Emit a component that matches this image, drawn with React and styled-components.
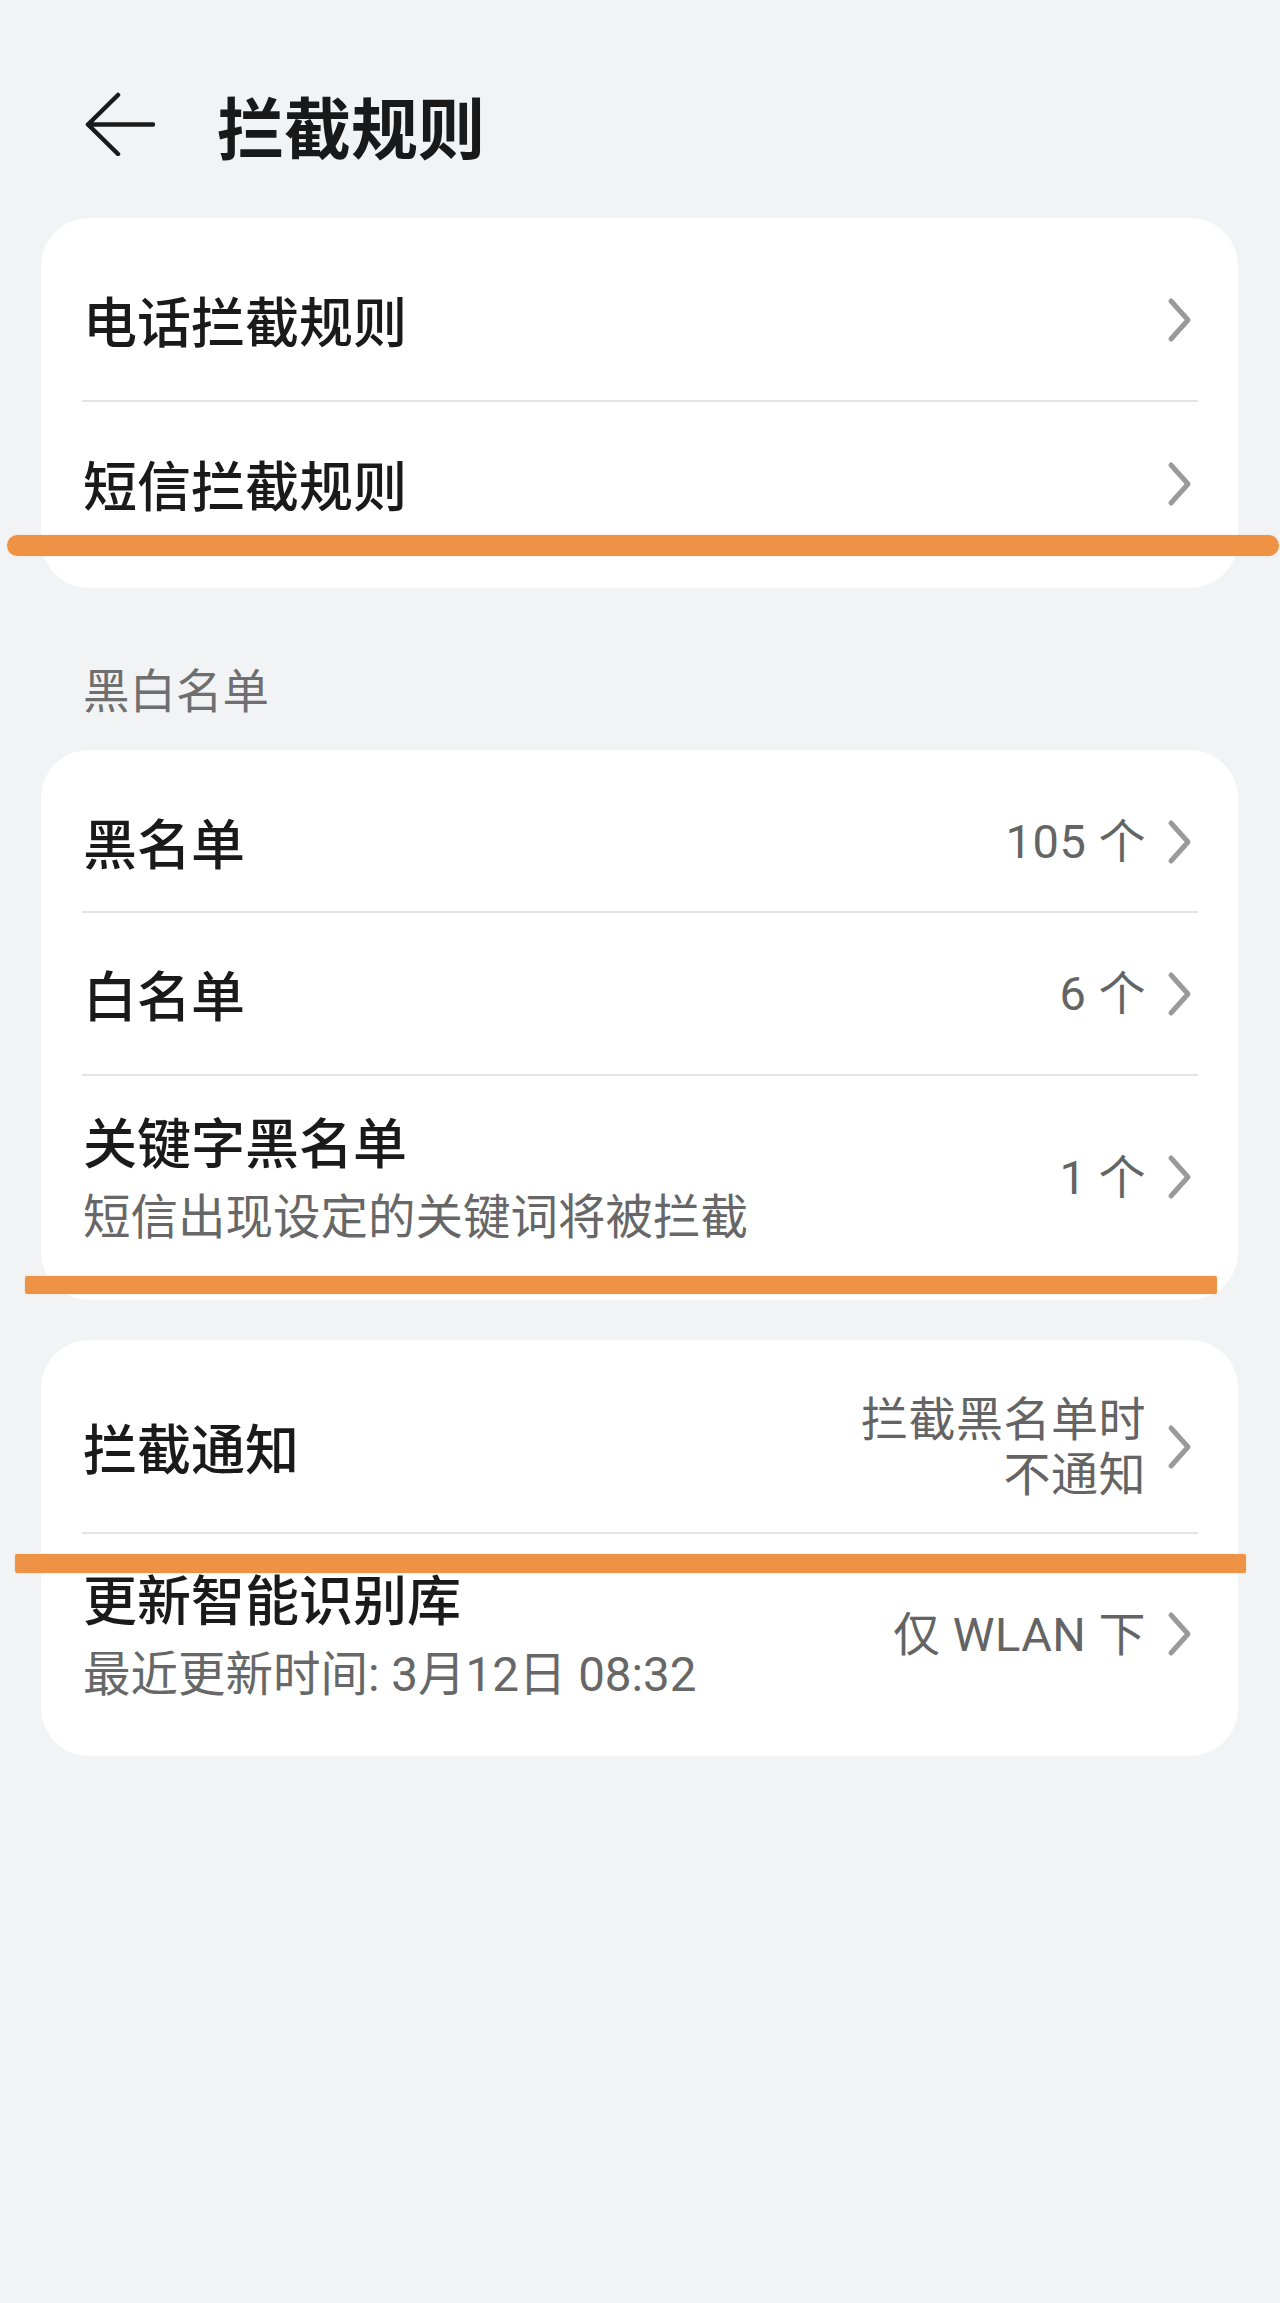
import React from "react";
import styled, { createGlobalStyle } from "styled-components";

const GlobalStyle = createGlobalStyle`
  html, body {
    margin: 0;
    padding: 0;
    background: #f1f3f5;
  }
  body {
    font-family: Roboto, "Noto Sans CJK SC", "Noto Sans", sans-serif;
    -webkit-font-smoothing: antialiased;
  }
`;

const Page = styled.div`
  position: relative;
  min-height: 2303px;
  box-sizing: border-box;
  padding: 60px 42px 0 41px;
  background: #f1f3f5;
`;

const Header = styled.header`
  display: flex;
  align-items: center;
  height: 128px;
  padding-left: 44px;
`;

const BackButton = styled.button`
  display: flex;
  padding: 0;
  border: 0;
  background: none;
  cursor: pointer;
`;

const Title = styled.h1`
  margin: 0 0 0 62px;
  font-family: "Noto Sans CJK SC", sans-serif;
  font-size: 67px;
  font-weight: 700;
  line-height: 1;
  color: #191919;
`;

const Card = styled.section`
  background: #ffffff;
  border-radius: 48px;
  padding: 22px 0;
  margin-top: ${(p) => p.$gap}px;
`;

const SectionLabel = styled.div`
  margin: 70px 0 32px;
  padding-left: 42px;
  font-family: "Noto Sans CJK SC", sans-serif;
  font-size: 46.5px;
  line-height: 60px;
  color: #6f6f6f;
`;

const Row = styled.div`
  display: flex;
  align-items: center;
  justify-content: space-between;
  height: ${(p) => p.$h}px;
  padding: 0 44px 0 42px;
`;

const TextBlock = styled.div`
  display: flex;
  flex-direction: column;
  gap: 11px;
`;

const RowTitle = styled.div`
  font-family: "Noto Sans CJK SC", sans-serif;
  font-size: 54px;
  font-weight: 500;
  line-height: 70px;
  color: #1a1a1a;
`;

const RowSub = styled.div`
  font-size: 47.5px;
  line-height: 62px;
  color: #676767;
`;

const Trail = styled.div`
  display: flex;
  align-items: center;
  gap: 20px;
`;

const Value = styled.div`
  font-size: 47px;
  line-height: 55px;
  letter-spacing: 0.5px;
  text-align: right;
  color: #646464;
  white-space: pre-line;
`;

const Divider = styled.div`
  height: 2px;
  margin: 0 40px 0 41px;
  background: #e4e4e4;
`;

/* Hand-drawn highlight strokes laid over the settings list */
const Mark = styled.div`
  position: absolute;
  left: ${(p) => p.$x}px;
  top: ${(p) => p.$y}px;
  width: ${(p) => p.$w}px;
  height: ${(p) => p.$t}px;
  background: #ee9246;
  border-radius: ${(p) => (p.$round ? p.$t / 2 : 2)}px;
  box-shadow: 0 0 2px rgba(255, 200, 150, 0.6);
  pointer-events: none;
`;

const BackArrow = () => (
  <svg width="70" height="64" viewBox="0 0 70 64" aria-hidden="true">
    <path
      d="M33 3 L3 32.5 L33 62 M3 32.5 H68"
      fill="none"
      stroke="#1a1a1a"
      strokeWidth="4.5"
      strokeLinecap="round"
      strokeLinejoin="round"
    />
  </svg>
);

const Chevron = () => (
  <svg width="28" height="46" viewBox="0 0 28 46" aria-hidden="true">
    <path
      d="M5 4 L22 23 L5 42"
      fill="none"
      stroke="#9a9a9a"
      strokeWidth="5"
      strokeLinecap="round"
      strokeLinejoin="round"
    />
  </svg>
);

const SettingRow = ({ h, title, sub, value }) => (
  <Row $h={h}>
    {sub ? (
      <TextBlock>
        <RowTitle>{title}</RowTitle>
        <RowSub>{sub}</RowSub>
      </TextBlock>
    ) : (
      <RowTitle>{title}</RowTitle>
    )}
    <Trail>
      {value && <Value>{value}</Value>}
      <Chevron />
    </Trail>
  </Row>
);

export default function App() {
  return (
    <>
      <GlobalStyle />
      <Page>
        <Header>
          <BackButton aria-label="返回">
            <BackArrow />
          </BackButton>
          <Title>拦截规则</Title>
        </Header>

        <Card $gap={30}>
          <SettingRow h={160} title="电话拦截规则" />
          <Divider />
          <SettingRow h={164} title="短信拦截规则" />
        </Card>

        <SectionLabel>黑白名单</SectionLabel>

        <Card $gap={0}>
          <SettingRow h={139} title="黑名单" value="105 个" />
          <Divider />
          <SettingRow h={161} title="白名单" value="6 个" />
          <Divider />
          <SettingRow
            h={202}
            title="关键字黑名单"
            sub="短信出现设定的关键词将被拦截"
            value="1 个"
          />
        </Card>

        <Card $gap={40}>
          <SettingRow h={170} title="拦截通知" value={"拦截黑名单时\n不通知"} />
          <Divider />
          <SettingRow
            h={200}
            title="更新智能识别库"
            sub="最近更新时间: 3月12日 08:32"
            value="仅 WLAN 下"
          />
        </Card>

        <Mark $x={7} $y={535} $w={1272} $t={21} $round />
        <Mark $x={25} $y={1276} $w={1192} $t={18} />
        <Mark $x={15} $y={1554} $w={1231} $t={19} />
      </Page>
    </>
  );
}
